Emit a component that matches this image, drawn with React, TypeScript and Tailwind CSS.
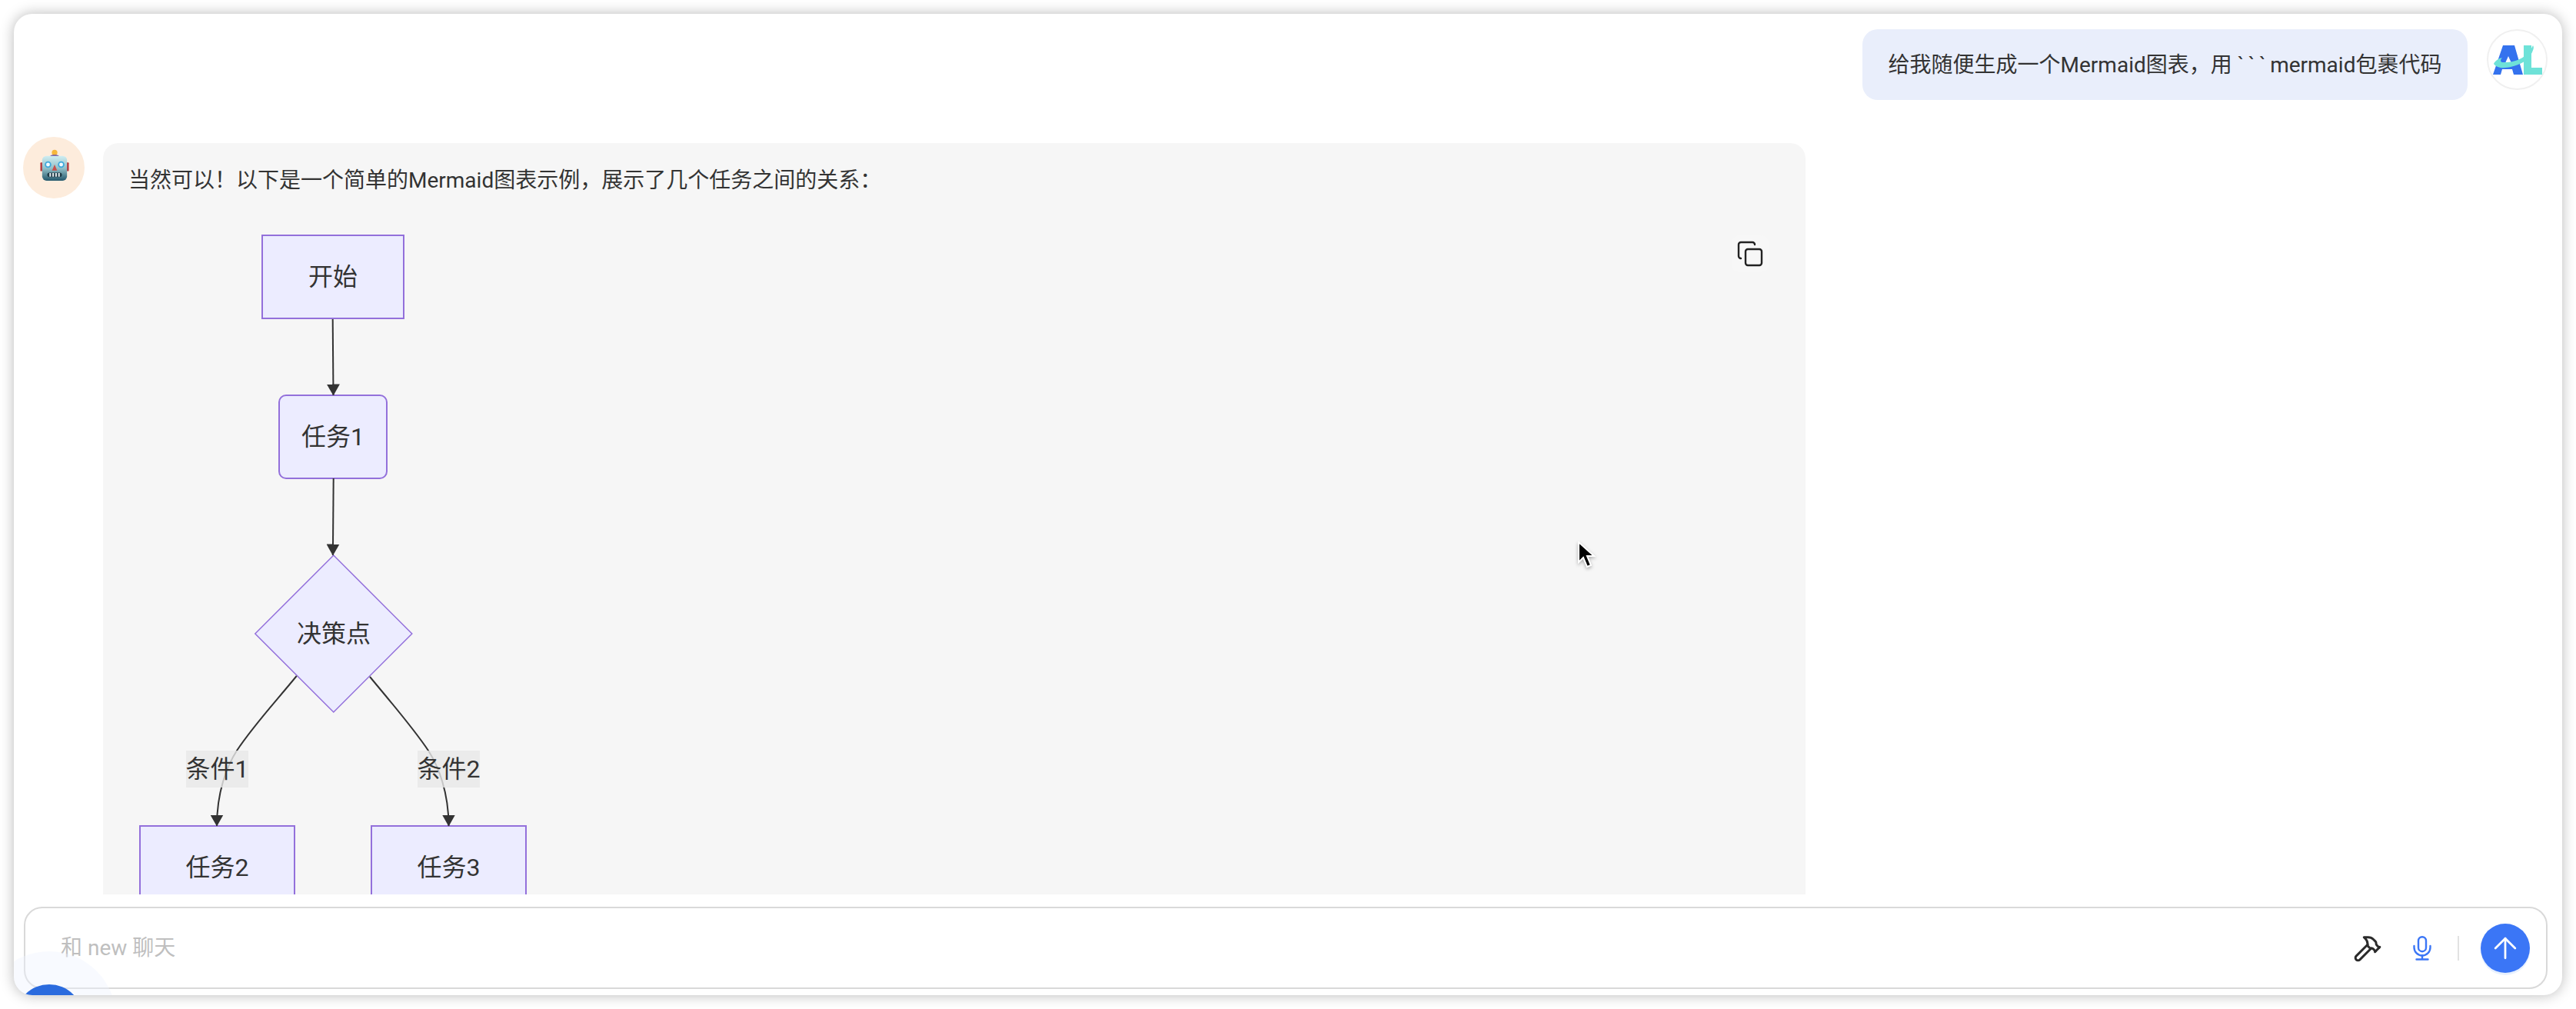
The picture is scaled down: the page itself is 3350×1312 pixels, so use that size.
import { ArrowUp, Copy, Hammer } from "lucide-react";

function AlLogo() {
  return (
    <svg viewBox="2 2 75 75" className="h-[75px] w-[75px] shrink-0">
      <path d="M48 21h10v29h14v9H48z" fill="#6ee2d8" />
      <path d="M21 21h15l11 38H35l-2-7H20l-2 7H8z" fill="#3472ee" />
      <path d="M28 35l4 9h-8z" fill="#ffffff" />
      <path d="M9 45c2-4 6-7 11-8-2 2-3 5 0 6 14 1 32-4 40-22 2 3 0 6-1 9-5 11-15 16-28 19-8 2-18 2-22-4z" fill="#6ee2d8" />
    </svg>
  );
}

function MicIcon() {
  return (
    <svg viewBox="0 0 24 32" className="h-[32px] w-[24px] text-[#3b76f6]" fill="none" stroke="currentColor" strokeWidth="2.400" strokeLinecap="round">
      <rect x="7" y="1.200" width="10" height="19" rx="5" />
      <path d="M1.500 13v2a10.500 10.500 0 0 0 21 0v-2" />
      <path d="M12 25.500v5M4.500 30.500h15" />
    </svg>
  );
}

function RobotEmoji() {
  return (
    <svg viewBox="0 0 40 44" className="h-[42px] w-[38px]">
      <defs>
        <linearGradient id="robotHead" x1="0" y1="0" x2="0" y2="1">
          <stop offset="0" stopColor="#cfeef2" />
          <stop offset="0.5" stopColor="#93c0c8" />
          <stop offset="1" stopColor="#24586c" />
        </linearGradient>
      </defs>
      <circle cx="20" cy="4.500" r="3.800" fill="#f6b73c" />
      <path d="M14 9c2-2 10-2 12 0-1 3-11 3-12 0z" fill="#6a4fa0" />
      <rect x="0.500" y="18" width="4" height="12" rx="1" fill="#b5383c" />
      <rect x="35.500" y="18" width="4" height="12" rx="1" fill="#b5383c" />
      <rect x="3" y="9" width="34" height="34" rx="6" fill="url(#robotHead)" />
      <circle cx="11" cy="21" r="4.500" fill="#3fa9dc" />
      <circle cx="11" cy="21" r="2.600" fill="#f4fbff" />
      <circle cx="29" cy="21" r="4.500" fill="#3fa9dc" />
      <circle cx="29" cy="21" r="2.600" fill="#f4fbff" />
      <path d="M20 21l3.500 8h-7z" fill="#c8504c" />
      <rect x="10" y="32" width="20" height="6" rx="3" fill="#1f3a46" />
      <path d="M14 32.500v5M18 32.500v5M22 32.500v5M26 32.500v5" stroke="#dfe7ea" strokeWidth="2.200" />
    </svg>
  );
}

function Box({ className, label }: { className: string; label: string }) {
  return (
    <div className={`absolute flex items-center justify-center whitespace-nowrap border-2 border-[#9370db] bg-[#ececff] pb-[1px] ${className}`}>
      {label}
    </div>
  );
}

function EdgeLabel({ className, label }: { className: string; label: string }) {
  return (
    <div className={`absolute flex h-[48px] items-center justify-center whitespace-nowrap bg-[#e8e8e8]/80 pb-[1px] ${className}`}>{label}</div>
  );
}

function Diagram() {
  return (
    <div className="relative h-[900px] w-[560px] text-[32px] leading-none text-[#333333]">
      <Box className="left-[173px] top-[15px] h-[110px] w-[186px]" label="开始" />
      <Box className="left-[195px] top-[223px] h-[110px] w-[142px] rounded-[10px]" label="任务1" />
      <Box className="left-[14px] top-[783px] h-[110px] w-[203px]" label="任务2" />
      <Box className="left-[315px] top-[783px] h-[110px] w-[203px]" label="任务3" />
      <svg viewBox="0 0 560 900" className="absolute left-0 top-0 h-[900px] w-[560px]">
        <defs>
          <marker id="arrowEnd" viewBox="0 0 15 17" refX="14.500" refY="8.500" markerWidth="15" markerHeight="17" orient="auto" markerUnits="userSpaceOnUse">
            <path d="M0 0L15 8.500L0 17z" fill="#333333" />
          </marker>
        </defs>
        <path d="M265.700 125L266.500 224" fill="none" stroke="#333333" strokeWidth="2" markerEnd="url(#arrowEnd)" />
        <polygon points="266.800,432 368.800,534 266.800,636 164.800,534" fill="#ececff" stroke="#9370db" strokeWidth="1.500" />
        <path d="M266.700 332L265.900 432" fill="none" stroke="#333333" strokeWidth="2" markerEnd="url(#arrowEnd)" />
        <path d="M218.700 589C190 624 162 654 141 686C128 706 115 740 115 784" fill="none" stroke="#333333" strokeWidth="2" markerEnd="url(#arrowEnd)" />
        <path d="M314 590C342 624 370 656 390 686C403 706 416.500 740 416.500 784" fill="none" stroke="#333333" strokeWidth="2" markerEnd="url(#arrowEnd)" />
      </svg>
      <div className="absolute left-[165px] top-[432px] flex h-[204px] w-[204px] items-center justify-center pb-[1px]">决策点</div>
      <EdgeLabel className="left-[75px] top-[686px] w-[81px]" label="条件1" />
      <EdgeLabel className="left-[376px] top-[686px] w-[81px]" label="条件2" />
    </div>
  );
}

export default function App() {
  return (
    <div className="h-[1312px] w-[3350px] overflow-hidden bg-white p-[18px] font-['Roboto','Noto_Sans_CJK_SC',sans-serif] text-[28px] text-[#333333]">
      <div className="relative flex h-[1276px] w-[3314px] flex-col overflow-hidden rounded-[24px] bg-white shadow-[0_0_18px_rgba(0,0,0,0.28)]">
        <main className="h-[1145px] overflow-hidden pt-[20px]">
          <div className="flex items-start justify-end gap-[25px] pr-[19px]">
            <div className="flex h-[92px] w-[787px] items-center justify-center whitespace-nowrap rounded-[20px] bg-[#e9eefb] pt-[1px]">
              <span>
                给我随便生成一个Mermaid图表，用 <span className="tracking-[5.5px]">```</span>mermaid包裹代码
              </span>
            </div>
            <div className="flex h-[79px] w-[79px] items-center justify-center rounded-full border-2 border-[#f0f0f0] bg-white">
              <AlLogo />
            </div>
          </div>
          <div className="mt-[48px] flex items-start gap-[24px] pl-[12px]">
            <div className="flex h-[80px] w-[80px] items-center justify-center rounded-full bg-[#fdecdc] pb-[6px] pl-[2px]">
              <RobotEmoji />
            </div>
            <div className="relative mt-[8px] w-[2214px] rounded-[20px] bg-[#f6f6f6] pl-[33px] pt-[26px]">
              <p className="h-[46px] leading-[46px]">当然可以！以下是一个简单的Mermaid图表示例，展示了几个任务之间的关系：</p>
              <div className="mt-[32px]">
                <Diagram />
              </div>
              <button className="absolute right-[48px] top-[120px] flex h-[48px] w-[48px] items-center justify-center rounded-[10px] bg-[#f7f7f7] text-[#222222]">
                <Copy size={36} strokeWidth={1.6} />
              </button>
            </div>
          </div>
        </main>
        <footer className="pb-[8px] pl-[13px] pr-[19px] pt-[16px]">
          <div className="flex h-[107px] items-center rounded-[24px] border-2 border-[#d9d9d9] bg-white pl-[46px] pr-[21px]">
            <span className="flex-1 text-[#bfbfbf]">和 new 聊天</span>
            <div className="flex items-center">
              <Hammer size={38} strokeWidth={1.9} className="text-[#2b2b2b]" />
              <div className="ml-[40px]">
                <MicIcon />
              </div>
              <div className="ml-[34px] h-[32px] w-[2px] bg-[#e2e2e2]" />
              <button className="ml-[28px] flex h-[64px] w-[64px] items-center justify-center rounded-full bg-[#3b76f6] text-white shadow-[0_3px_0_#e8f1fe]">
                <ArrowUp size={44} strokeWidth={1.5} />
              </button>
            </div>
          </div>
        </footer>
        <div className="pointer-events-none absolute bottom-[-117px] left-[-41px] flex h-[174px] w-[174px] items-center justify-center rounded-full bg-[#eef3fe]/40">
          <div className="h-[88px] w-[88px] rounded-full bg-[#2b6bde]" />
        </div>
      </div>
      <svg viewBox="0 0 24 36" className="pointer-events-none absolute left-[2052px] top-[704px] h-[36px] w-[24px] drop-shadow-[0_2px_2px_rgba(0,0,0,0.3)]">
        <path d="M1 1v26l6-6 5 12 5-2-5-12h9z" fill="#000000" stroke="#ffffff" strokeWidth="2" />
      </svg>
    </div>
  );
}
